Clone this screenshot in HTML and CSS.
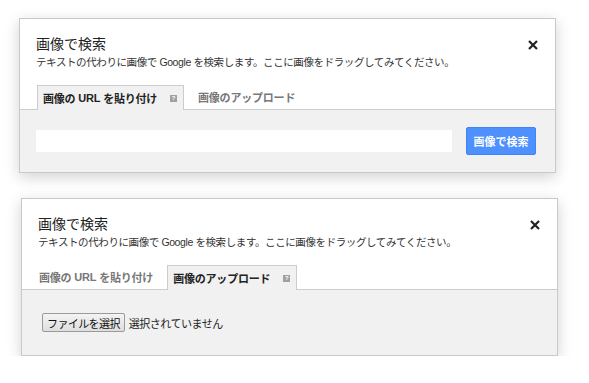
FILE: index.html
```html
<!DOCTYPE html>
<html lang="ja">
<head>
    <meta charset="UTF-8">
    <meta name="viewport" content="width=device-width, initial-scale=1.0">
    <title>画像で検索</title>
    <link rel="stylesheet" href="styles.css">
</head>
<body>
    <div class="page">
        <!-- URL tab selected -->
        <div class="dialog dialog-url">
            <div class="dialog-head">
                <div class="head-text">
                    <h1 class="title">画像で検索</h1>
                    <p class="subtitle">テキストの代わりに画像で Google を検索します。ここに画像をドラッグしてみてください。</p>
                </div>
                <a class="close" href="#">
                    <svg width="10" height="10" viewBox="0 0 10 10"><path d="M1 1L9 9M9 1L1 9" stroke="#222" stroke-width="2.2" fill="none"/></svg>
                </a>
            </div>
            <div class="tabs">
                <div class="tab active">画像の <b>URL</b> を貼り付け <span class="help">?</span></div>
                <div class="tab">画像のアップロード</div>
            </div>
            <div class="dialog-body url-body">
                <input class="url-input" type="text">
                <button class="search-btn">画像で検索</button>
            </div>
        </div>

        <!-- upload tab selected -->
        <div class="dialog dialog-upload">
            <div class="dialog-head">
                <div class="head-text">
                    <h1 class="title">画像で検索</h1>
                    <p class="subtitle">テキストの代わりに画像で Google を検索します。ここに画像をドラッグしてみてください。</p>
                </div>
                <a class="close" href="#">
                    <svg width="10" height="10" viewBox="0 0 10 10"><path d="M1 1L9 9M9 1L1 9" stroke="#222" stroke-width="2.2" fill="none"/></svg>
                </a>
            </div>
            <div class="tabs">
                <div class="tab">画像の <b>URL</b> を貼り付け</div>
                <div class="tab active">画像のアップロード <span class="help">?</span></div>
            </div>
            <div class="dialog-body upload-body">
                <button class="file-btn">ファイルを選択</button>
                <span class="file-status">選択されていません</span>
            </div>
        </div>
    </div>
</body>
</html>
```

FILE: styles.css
```css
body, html {
    margin: 0;
    padding: 0;
    background: #fff;
    font-family: "Liberation Sans", Arial, "Noto Sans CJK JP", sans-serif;
    color: #222;
}
.page {
    padding-top: 18px;
    display: flex;
    flex-direction: column;
    gap: 25px;
}
.dialog {
    width: 535px;
    border: 1px solid #c9c9c9;
    background: #fff;
    box-shadow: 0 4px 14px rgba(0, 0, 0, 0.18);
}
.dialog-url {
    margin-left: 19px;
}
.dialog-upload {
    margin-left: 21px;
}
.dialog-head {
    display: flex;
    justify-content: space-between;
    padding: 15px 17px 0 16px;
}
.title {
    margin: 0;
    font-size: 14px;
    line-height: 20px;
    font-weight: normal;
    color: #222;
}
.subtitle {
    margin: 0;
    font-size: 10.5px;
    line-height: 16px;
    letter-spacing: -0.4px;
    color: #333;
}
.close {
    display: block;
    margin-top: 6px;
    width: 10px;
    height: 10px;
    line-height: 0;
}
.tabs {
    display: flex;
    gap: 14px;
    margin-top: 15px;
    padding-left: 17px;
    border-bottom: 1px solid #ccc;
    height: 24px;
}
.tab {
    display: flex;
    align-items: center;
    font-size: 11px;
    font-weight: bold;
    color: #777;
    letter-spacing: -0.2px;
    white-space: pre;
}
.tab b {
    font-weight: bold;
}
.tab.active {
    color: #222;
    background: #f1f1f1;
    border: 1px solid #ccc;
    border-bottom: none;
    padding: 0 6px 0 5px;
    height: 24px;
    margin-bottom: -1px;
}
.help {
    display: inline-block;
    width: 7px;
    height: 7px;
    margin-left: 10px;
    background: #a0a0a0;
    color: #fff;
    font-size: 6px;
    line-height: 7px;
    text-align: center;
    font-weight: bold;
}
.dialog-body {
    background: #f1f1f1;
    display: flex;
    align-items: center;
}
.url-body {
    height: 62px;
    padding: 0 19px 0 16px;
    justify-content: space-between;
}
.url-input {
    width: 416px;
    height: 22px;
    border: none;
    background: #fff;
    padding: 0;
    margin: 0;
}
.search-btn {
    width: 70px;
    height: 28px;
    border: 1px solid #3f86f5;
    border-radius: 2px;
    background: #4d90fe;
    color: #fff;
    font-family: inherit;
    font-size: 11px;
    font-weight: bold;
    padding: 0;
}
.upload-body {
    height: 65px;
    padding: 0 20px;
    gap: 4px;
}
.file-btn {
    height: 19px;
    padding: 0 4px;
    white-space: nowrap;
    border: 1px solid #9a9a9a;
    border-radius: 2px;
    background: linear-gradient(#f4f4f4, #dedede);
    color: #111;
    font-family: inherit;
    font-size: 11px;
    letter-spacing: -0.6px;
}
.file-status {
    font-size: 11px;
    letter-spacing: -0.5px;
    color: #222;
}
```
